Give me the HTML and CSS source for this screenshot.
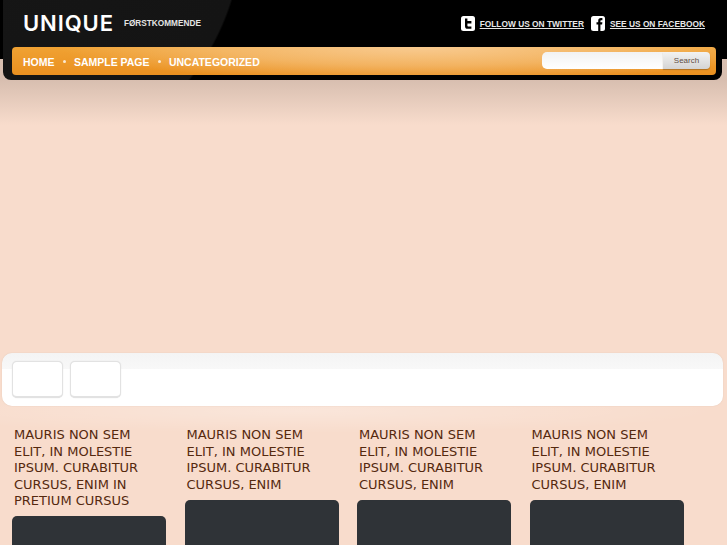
FILE: index.html
```html
<!DOCTYPE html>
<html lang="en">
<head>
<meta charset="utf-8">
<title>Unique</title>
<link rel="stylesheet" href="styles.css">
</head>
<body>
<header class="header">
  <div class="brand-row">
    <div class="brand">
      <span class="logo">UNIQUE</span>
      <span class="tagline">FØRSTKOMMENDE</span>
    </div>
    <div class="social">
      <a class="social-link" href="#">
        <svg class="social-icon" viewBox="0 0 14 15"><rect width="14" height="15" rx="2.5" fill="#fff"/><path d="M4 2.5h2.400v2.600h4v2.400h-4v2c0 .8.4 1.100 1.100 1.100h2.900v2.200H6.600C4.900 12.800 4 11.800 4 10.200z" fill="#000"/></svg>
        <span>FOLLOW US ON TWITTER</span>
      </a>
      <a class="social-link" href="#">
        <svg class="social-icon" viewBox="0 0 14 15"><rect width="14" height="15" rx="2.5" fill="#fff"/><path d="M7.200 15V8.600H5.500V6.300h1.700V4.800C7.200 3 8.200 2 9.900 2h1.500v2.200h-1c-.7 0-1 .3-1 1v1.100h2l-.3 2.300H9.400V15z" fill="#000"/></svg>
        <span>SEE US ON FACEBOOK</span>
      </a>
    </div>
  </div>
  <nav class="nav">
    <ul class="menu">
      <li><a href="#">HOME</a></li>
      <li class="dot"></li>
      <li><a href="#">SAMPLE PAGE</a></li>
      <li class="dot"></li>
      <li><a href="#">UNCATEGORIZED</a></li>
    </ul>
    <form class="search">
      <input class="search-input" type="text" aria-label="Search">
      <button class="search-btn" type="button">Search</button>
    </form>
  </nav>
</header>

<section class="slider">
  <div class="thumb"></div>
  <div class="thumb"></div>
</section>

<main class="posts">
  <article class="post">
    <h2 class="post-title">Mauris non sem elit, in molestie ipsum. Curabitur cursus, enim in pretium cursus</h2>
    <div class="post-image"></div>
  </article>
  <article class="post">
    <h2 class="post-title">Mauris non sem elit, in molestie ipsum. Curabitur cursus, enim</h2>
    <div class="post-image"></div>
  </article>
  <article class="post">
    <h2 class="post-title">Mauris non sem elit, in molestie ipsum. Curabitur cursus, enim</h2>
    <div class="post-image"></div>
  </article>
  <article class="post">
    <h2 class="post-title">Mauris non sem elit, in molestie ipsum. Curabitur cursus, enim</h2>
    <div class="post-image"></div>
  </article>
</main>
</body>
</html>
```
FILE: styles.css
```css
* { box-sizing: border-box; }
html, body { height: 545px; overflow: hidden; }
body {
  margin: 0;
  font-family: "Liberation Sans", Arial, sans-serif;
  background:
    linear-gradient(#000 59px, transparent 59px),
    linear-gradient(rgba(150,130,118,.33) 80px, rgba(150,130,118,0) 125px),
    radial-gradient(ellipse 420px 22px at 300px 411px, rgba(255,255,255,.28), transparent),
    #f8dccc;
}
.header {
  height: 80px;
  margin: 0 5px 0 3px;
  padding: 0 6px 5px 9px;
  border-radius: 0 0 8px 8px;
  background:
    radial-gradient(circle at 0 -70px, #161616 0, #141414 238px, #000 240px),
    #000;
}
.brand-row {
  height: 47px;
  display: flex;
  justify-content: space-between;
  align-items: center;
  padding: 0 11px;
}
.brand { display: flex; align-items: center; gap: 10px; margin-top: -2px; }
.logo {
  font-family: Inter, "Liberation Sans", sans-serif;
  font-size: 22px;
  font-weight: 600;
  line-height: 1;
  color: #fff;
  letter-spacing: .9px;
}
.tagline { font-size: 8.25px; font-weight: 700; color: #e4e4e4; position: relative; top: 1px; }
.social { display: flex; gap: 7px; }
.social-link {
  display: flex;
  align-items: center;
  gap: 5px;
  font-size: 8.35px;
  font-weight: 700;
  color: #e8e8e8;
  text-decoration: none;
}
.social-link span { text-decoration: underline; }
.social-icon { width: 14px; height: 15px; display: block; }
.nav {
  height: 28px;
  display: flex;
  justify-content: space-between;
  align-items: center;
  padding: 0 6px 0 11px;
  border-radius: 4px;
  background:
    radial-gradient(ellipse 360px 34px at 58% 0, #f8ca90 0, rgba(248,202,144,.55) 55%, rgba(248,202,144,0) 100%),
    linear-gradient(#f0a233, #ea9020);
}
.menu { display: flex; align-items: center; gap: 8.2px; margin: 0; padding: 0; list-style: none; }
.menu a {
  font-size: 10.5px;
  font-weight: 700;
  color: #fff;
  text-decoration: none;
}
.dot { width: 3px; height: 3px; background: #fbe9d2; border-radius: 50%; }
.search { display: flex; margin-bottom: 1px; }
.search-input {
  width: 121px;
  height: 17px;
  padding: 0;
  border: 0;
  border-radius: 5px 0 0 5px;
  background: linear-gradient(#f2f2f2, #fff);
}
.search-btn {
  width: 47px;
  height: 17px;
  padding: 0;
  border: 0;
  border-radius: 0 4px 4px 0;
  font-family: "Liberation Sans", Arial, sans-serif;
  font-size: 8px;
  color: #5f4e44;
  background: linear-gradient(#f2f2f2, #d4d4d4);
  box-shadow: 0 1px 1px rgba(120,80,30,.5);
}
.slider {
  height: 53px;
  margin: 273px 4px 0 2px;
  padding: 8px 10px;
  display: flex;
  gap: 7px;
  border-radius: 10px;
  background: linear-gradient(#f4f4f4, #f8f8f8 16px, #fff 16px);
  box-shadow: 0 0 1px rgba(190,160,140,.6);
}
.thumb {
  width: 51px;
  height: 37px;
  background: #fff;
  border: 1px solid #e2e2e2;
  border-bottom-width: 2px;
  border-radius: 5px;
  box-shadow: 0 0 1px #d8d8d8;
}
.posts {
  display: flex;
  align-items: flex-start;
  gap: 18.5px;
  margin-top: 21px;
  padding-left: 12px;
}
.post { width: 154px; flex: none; }
.post-title {
  margin: 0 0 6.6px;
  padding: 0 22px 0 2px;
  font-family: "DejaVu Sans", sans-serif;
  font-size: 13px;
  line-height: 16.5px;
  font-weight: 400;
  text-transform: uppercase;
  color: #55290f;
}
.post-image {
  height: 120px;
  border-radius: 5px;
  background: #2f3337;
}
```
